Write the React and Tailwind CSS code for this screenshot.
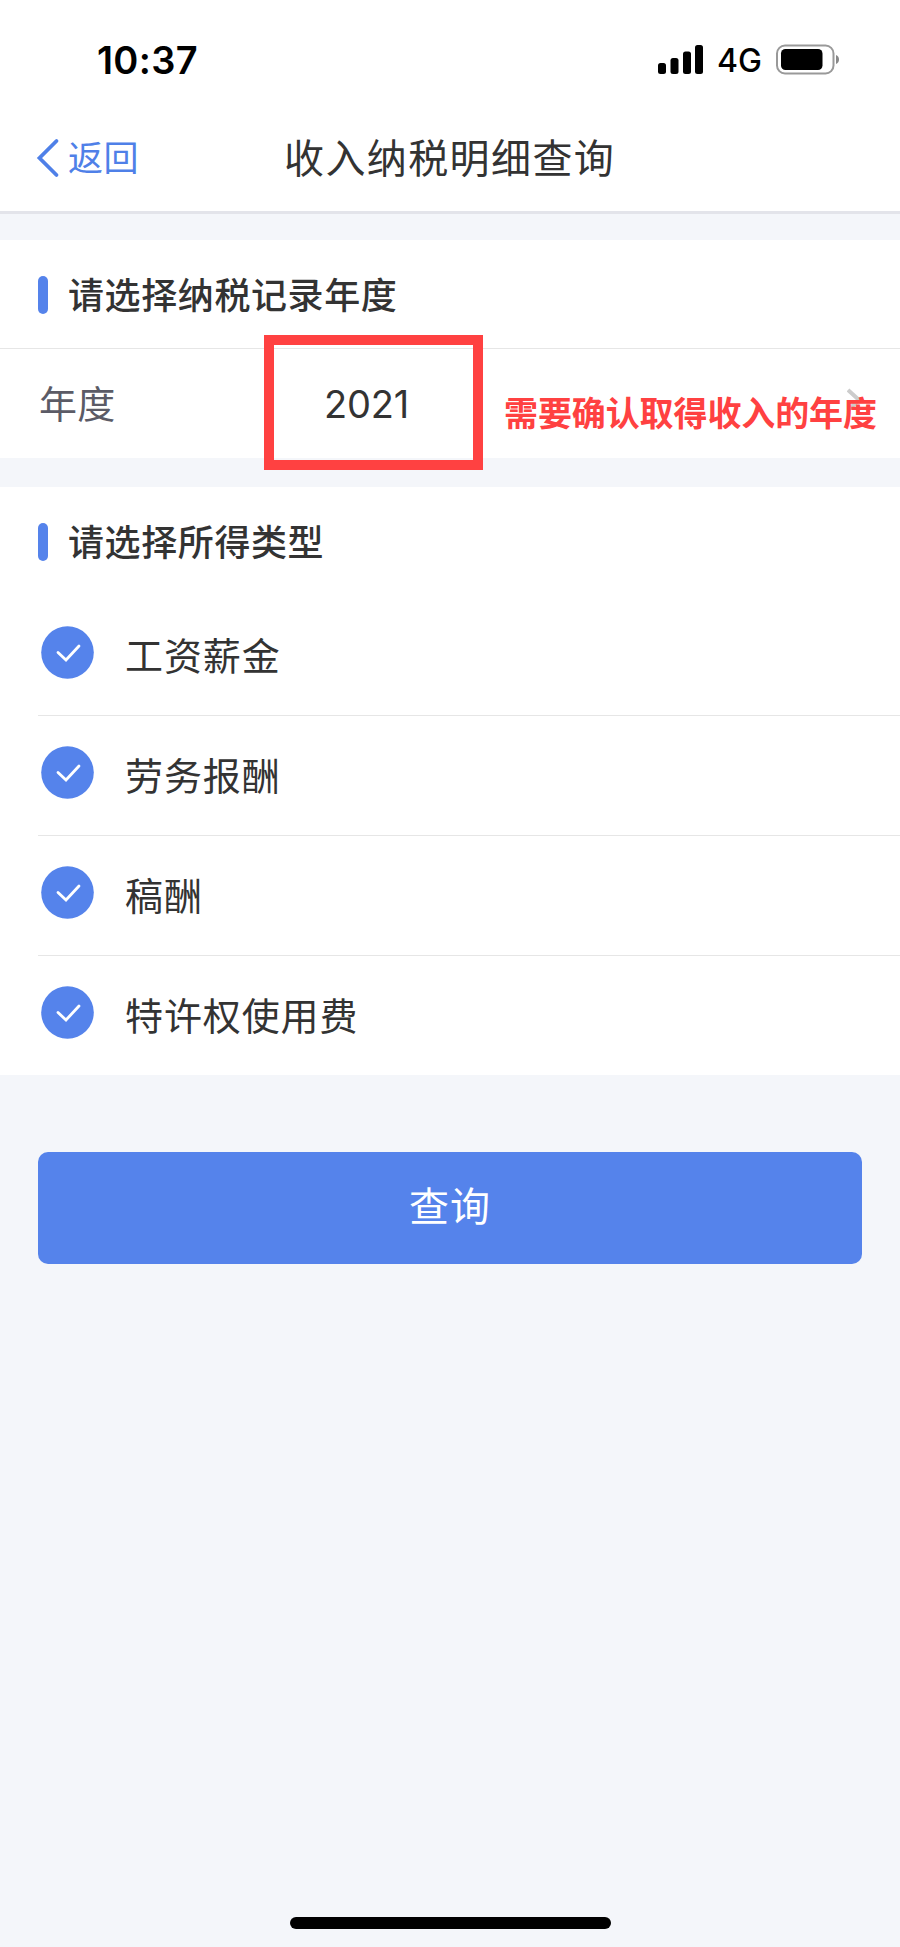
const incomeTypes = ['工资薪金', '劳务报酬', '稿酬', '特许权使用费']

function StatusBar() {
  return (
    <div className="flex h-[105px] items-start pt-9 pl-[97px] text-black">
      <span className="w-[561px] font-['Inter'] text-[38px] leading-12 font-semibold tracking-[0.3px]">10:37</span>
      <svg className="mt-2 h-8 w-[48px]" viewBox="0 0 48 32">
        <rect x="0" y="19" width="8" height="11" rx="2.5" />
        <rect x="12.5" y="14" width="8" height="16" rx="2.5" />
        <rect x="25" y="7.5" width="8" height="22.5" rx="2.5" />
        <rect x="37" y="1" width="8" height="29" rx="2.5" />
      </svg>
      <span className="ml-[11px] w-[56px] font-['Inter'] text-[32px] leading-[50px] font-medium">4G</span>
      <svg className="mt-2 h-8 w-[68px]" viewBox="0 0 68 32">
        <rect x="4" y="1.5" width="56.5" height="28" rx="8" fill="none" stroke="#999" strokeWidth="2" />
        <rect x="8" y="5" width="41.5" height="21" rx="4.5" />
        <path d="M63 11c4 1.500 4 7.500 0 9z" fill="#888" />
      </svg>
    </div>
  )
}

function NavBar() {
  return (
    <div className="flex h-[109px] items-center border-b-3 border-[#e3e4ea] pb-[3px]">
      <div className="flex w-[284px] items-center pl-[36px] text-[#4f80e8]">
        <svg className="mt-[2px] h-10 w-6" viewBox="0 0 24 40" fill="none" stroke="currentColor" strokeWidth="3.8" strokeLinecap="round">
          <path d="M20.500 3 3.500 20l17 17" />
        </svg>
        <span className="mb-[2px] ml-2 text-[35px] leading-none tracking-[0.5px]">返回</span>
      </div>
      <h1 className="mb-[2px] text-[40px] leading-none tracking-[1.4px] text-[#333]">收入纳税明细查询</h1>
    </div>
  )
}

function SectionTitle({ children }) {
  return (
    <div className="flex h-[108px] items-center pl-[38px]">
      <span className="mt-[2px] h-[38px] w-[10px] rounded-full bg-[#5583eb]" />
      <h2 className="mb-[3px] ml-[20px] text-[36px] leading-none font-medium tracking-[0.6px] text-[#333]">{children}</h2>
    </div>
  )
}

function CheckRow({ label }) {
  return (
    <li className="ml-[38px] flex h-[120px] items-center border-b border-[#e6e6e6] last:h-[119px] last:border-b-0">
      <svg className="mb-[6px] ml-[3px] size-[53px]" viewBox="0 0 53 53" fill="none">
        <circle cx="26.500" cy="26.500" r="26.300" fill="#5583eb" />
        <path d="m17 26.500 8 7.500 13-14" stroke="#fff" strokeWidth="2.800" strokeLinecap="round" />
      </svg>
      <span className="mb-[3px] ml-[31px] text-[38px] leading-none tracking-[0.9px] text-[#333]">{label}</span>
    </li>
  )
}

export default function App() {
  return (
    <div className="flex h-[1947px] w-[900px] flex-col bg-[#f4f6fa] font-['Noto_Sans_CJK_SC',sans-serif]">
      <header className="bg-white">
        <StatusBar />
        <NavBar />
      </header>

      <section className="relative mt-[26px] bg-white">
        <SectionTitle>请选择纳税记录年度</SectionTitle>
        <div className="flex h-[110px] items-center border-t border-[#e6e6e6] pl-[39px]">
          <span className="mb-1 w-[285px] text-[38px] leading-none tracking-[0.3px] text-[#5b5b66]">年度</span>
          <span className="font-['Inter'] text-[38px] leading-none tracking-[-0.2px] text-[#333]">2021</span>
          <svg className="mr-[37px] mb-[7px] ml-auto h-6 w-4" viewBox="0 0 16 24" fill="none" stroke="#ccc" strokeWidth="4">
            <path d="m1 2 11 10L1 22" />
          </svg>
        </div>
        {/* callout drawn over the year row */}
        <div className="absolute top-[95px] left-[264px] h-[135px] w-[219px] border-10 border-[#ff4141]" />
        <p className="absolute top-[155px] left-[504px] text-[34px] leading-none font-bold tracking-[-0.1px] whitespace-nowrap text-[#ff4141]">
          需要确认取得收入的年度
        </p>
      </section>

      <section className="mt-[29px] bg-white">
        <SectionTitle>请选择所得类型</SectionTitle>
        <ul className="pt-px">
          {incomeTypes.map((label) => (
            <CheckRow key={label} label={label} />
          ))}
        </ul>
      </section>

      <button className="mx-[38px] mt-[77px] h-[112px] rounded-[10px] bg-[#5583eb] pb-2 text-[40px] leading-none tracking-[1px] text-white">
        查询
      </button>

      <div className="mx-auto mt-auto mb-[18px] h-[12px] w-[321px] rounded-full bg-black" />
    </div>
  )
}
